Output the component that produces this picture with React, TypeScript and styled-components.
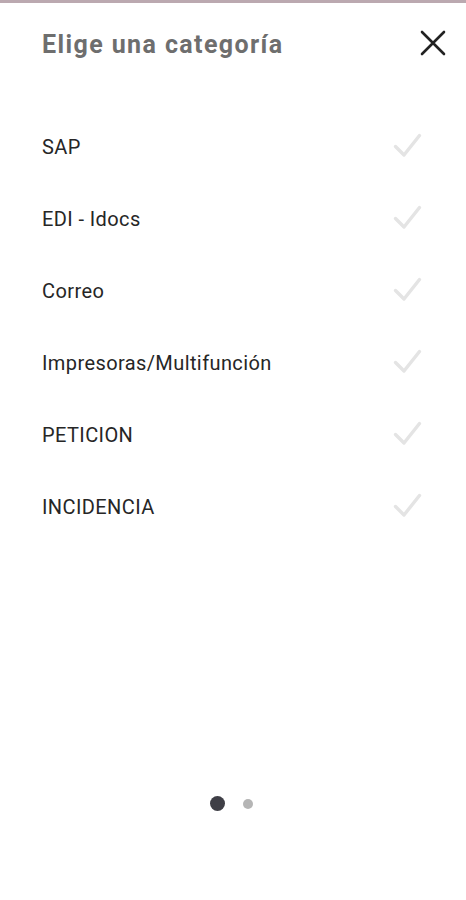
import styled, {createGlobalStyle} from "styled-components";

const GlobalStyle = createGlobalStyle`
  html, body {
    margin: 0;
    padding: 0;
    background: #fff;
    font-family: Roboto, "Liberation Sans", sans-serif;
  }
`

const Screen = styled.div`
  display: flex;
  flex-direction: column;
  width: 466px;
  height: 900px;
  box-sizing: border-box;
  border-top: 3px solid #bba9b0;
  background: #fff;
`

const Header = styled.div`
  display: flex;
  align-items: center;
  justify-content: space-between;
  padding: 22px 15px 0 42px;
  height: 36px;
`

const Title = styled.h1`
  margin: 3px 0 0;
  font-size: 25px;
  font-weight: 700;
  color: #6e6e6e;
  letter-spacing: 1.4px;
`

const CloseButton = styled.button`
  display: grid;
  place-items: center;
  width: 36px;
  height: 36px;
  padding: 0;
  border: none;
  background: transparent;
  cursor: pointer;
`

const List = styled.ul`
  list-style: none;
  margin: 50px 0 0;
  padding: 0;
`

const Item = styled.li`
  display: flex;
  align-items: center;
  justify-content: space-between;
  height: 72px;
  padding: 0 43px 0 42px;
  font-size: 20px;
  letter-spacing: 0.4px;
  color: #262626;
`

const Dots = styled.div`
  display: flex;
  align-items: center;
  justify-content: center;
  gap: 18px;
  margin-top: auto;
  margin-bottom: 89px;
  padding-right: 3px;
`

const Dot = styled.span<{ $active?: boolean }>`
  width: ${p => p.$active ? 15 : 10}px;
  height: ${p => p.$active ? 15 : 10}px;
  border-radius: 50%;
  background: ${p => p.$active ? "#3f3f46" : "#b5b5b5"};
`

const categories = ["SAP", "EDI - Idocs", "Correo", "Impresoras/Multifunción", "PETICION", "INCIDENCIA"]

const Check = () => (
  <svg width="32" height="32" viewBox="0 0 32 32" fill="none">
    <path d="M4.5 15.5l8.5 8.5L28.5 4.5" stroke="#e4e4e4" strokeWidth="3.4" strokeLinecap="round" strokeLinejoin="round"/>
  </svg>
)

export default function App() {
  return <>
    <GlobalStyle/>
    <Screen>
      <Header>
        <Title>Elige una categoría</Title>
        <CloseButton aria-label="Cerrar">
          <svg width="28" height="28" viewBox="0 0 28 28">
            <path d="M3 3L25 25M25 3L3 25" stroke="#222" strokeWidth="2.6" strokeLinecap="round"/>
          </svg>
        </CloseButton>
      </Header>
      <List>
        {categories.map(c => <Item key={c}>
          <span>{c}</span>
          <Check/>
        </Item>)}
      </List>
      <Dots>
        <Dot $active/>
        <Dot/>
      </Dots>
    </Screen>
  </>
}
